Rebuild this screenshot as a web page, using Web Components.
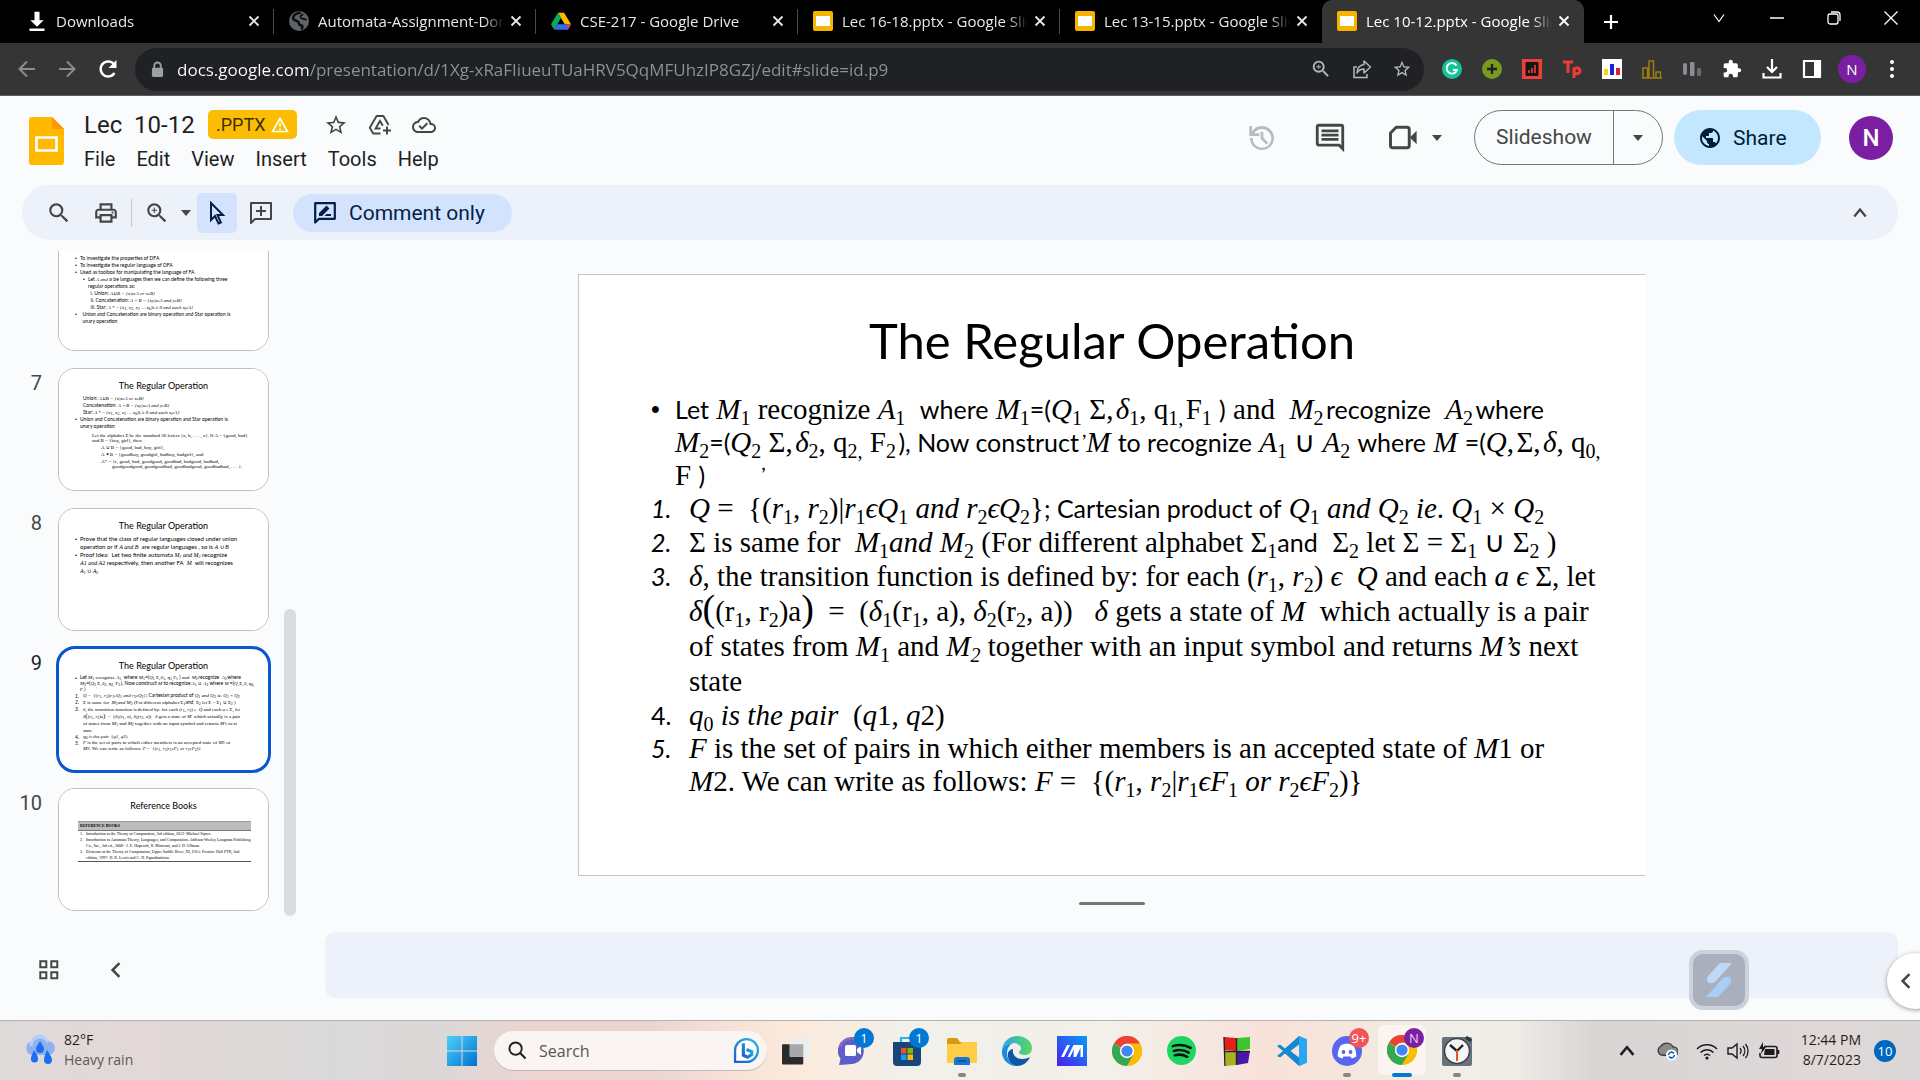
<!DOCTYPE html>
<html lang="en">
<head>
<meta charset="utf-8">
<title>Lec 10-12.pptx - Google Slides</title>
<style>
  html, body { margin: 0; height: 100%; }
  body { overflow: hidden; background: #f9fbfd; font-family: Roboto, "Liberation Sans", sans-serif; color: #1f1f1f; }
</style>
</head>
<body>
<app-desktop></app-desktop>
<script>
const ICONS = {
  dl: ['0 0 24 24', '<path d="M9 1h6v10h5l-8 8-8-8h5zM3 21h18v3H3z" fill="#fff"/>'],
  globeGrey: ['0 0 24 24', '<circle cx="12" cy="12" r="12" fill="#5f6368"/><path d="M14 2c-5 0-9 3-9 6 0 4 4 3 6 5s0 4 3 4 2 3 1 5" fill="none" stroke="#0b0b0b" stroke-width="3"/><path d="M17 4c-2 1-4 2-3 4s5 1 7 3" fill="none" stroke="#0b0b0b" stroke-width="2"/>'],
  drive: ['0 0 24 22', '<path d="M8.3 1h7.4L24 15h-7.5z" fill="#ffba00"/><path d="M8.300 1 12 7.500 3.800 21.500 0 15z" fill="#0da960"/><path d="M7.600 15H24l-3.800 6.500H3.800z" fill="#2d6ff0"/><path d="M18.600 15H24l-3.800 6.500z" fill="#ea4335"/>'],
  slidesTab: ['0 0 20 20', '<rect width="20" height="20" rx="2" fill="#f5b400"/><rect x="3" y="5" width="14" height="10" fill="#fff"/>'],
  close: ['0 0 12 12', '<path d="M1.500 1.500l9 9m0-9l-9 9" stroke="currentColor" stroke-width="1.800" fill="none"/>'],
  plus: ['0 0 16 16', '<path d="M8 1v14M1 8h14" stroke="#fff" stroke-width="2.200"/>'],
  down: ['0 0 16 16', '<path d="M3 4.500l5 7 5-7" stroke="currentColor" stroke-width="1.200" fill="none"/>'],
  min: ['0 0 14 14', '<path d="M0 7h14" stroke="#fff" stroke-width="1.500"/>'],
  max: ['0 0 14 14', '<rect x="1" y="3" width="10" height="10" rx="2" fill="none" stroke="#fff" stroke-width="1.300"/><path d="M4 1h6a3 3 0 0 1 3 3v6" fill="none" stroke="#fff" stroke-width="1.300"/>'],
  xthin: ['0 0 14 14', '<path d="M.500.500l13 13m0-13l-13 13" stroke="#fff" stroke-width="1.300"/>'],
  back: ['0 0 18 18', '<path d="M17 9H2m7-7.500L1.500 9 9 16.500" stroke="#8c8c8c" stroke-width="2" fill="none"/>'],
  fwd: ['0 0 18 18', '<path d="M1 9h15M9 1.500L16.500 9 9 16.500" stroke="#8c8c8c" stroke-width="2" fill="none"/>'],
  reload: ['0 0 20 20', '<path d="M16.500 14a7.500 7.500 0 1 1 .300-7.500" stroke="#fff" stroke-width="2.400" fill="none"/><path d="M18.500 1v8h-8z" fill="#fff"/>'],
  lock: ['0 0 14 18', '<path d="M3.500 8V5a3.500 3.500 0 0 1 7 0v3" stroke="#9aa0a6" stroke-width="2" fill="none"/><rect x="1" y="7" width="12" height="10" rx="1.500" fill="#9aa0a6"/>'],
  zoomin: ['0 0 24 24', '<path fill="currentColor" d="M15.500 14h-.790l-.280-.270A6.470 6.470 0 0 0 16 9.500 6.500 6.500 0 1 0 9.500 16c1.610 0 3.090-.590 4.230-1.570l.270.280v.790l5 4.990L20.490 19zm-6 0C7.010 14 5 11.990 5 9.500S7.010 5 9.500 5 14 7.010 14 9.500 11.990 14 9.500 14zm2.500-4h-2v2H9v-2H7V9h2V7h1v2h2z"/>'],
  search: ['0 0 24 24', '<path fill="currentColor" d="M15.500 14h-.790l-.280-.270A6.470 6.470 0 0 0 16 9.500 6.500 6.500 0 1 0 9.500 16c1.610 0 3.090-.590 4.230-1.570l.270.280v.790l5 4.990L20.490 19zm-6 0C7.010 14 5 11.990 5 9.500S7.010 5 9.500 5 14 7.010 14 9.500 11.990 14 9.500 14z"/>'],
  find: ['0 0 20 20', '<circle cx="8" cy="8" r="6.500" fill="none" stroke="#222" stroke-width="2"/><path d="M12.700 12.700L18.500 18.500" stroke="#222" stroke-width="2.200"/>'],
  share: ['0 0 20 20', '<path d="M5 8H2v10.500h13V15" fill="none" stroke="#b5b8bc" stroke-width="1.500"/><path d="M12 2l6.500 6-6.500 6v-4c-4 0-5.500 1.500-7 4 .300-5 3-8 7-8.500z" fill="none" stroke="#b5b8bc" stroke-width="1.500" stroke-linejoin="round"/>'],
  star: ['0 0 24 24', '<path fill="currentColor" d="M22 9.240l-7.190-.620L12 2 9.190 8.630 2 9.240l5.460 4.730L5.820 21 12 17.270 18.180 21l-1.630-7.030zM12 15.400l-3.760 2.270 1-4.280-3.320-2.880 4.380-.380L12 6.100l1.710 4.040 4.380.380-3.320 2.880 1 4.280z"/>'],
  gram: ['0 0 20 20', '<circle cx="10" cy="10" r="10" fill="#15c39a"/><path d="M14.500 6.500A5.300 5.300 0 1 0 15 11h-4" fill="none" stroke="#fff" stroke-width="1.900"/>'],
  gplus: ['0 0 20 20', '<circle cx="10" cy="10" r="10" fill="#7a9a1f"/><path d="M10 5v10M5 10h10" stroke="#222" stroke-width="2.400"/>'],
  redbox: ['0 0 20 20', '<rect width="20" height="20" fill="#ef4038"/><rect x="3.500" y="3" width="13" height="14" rx="1" fill="#161616"/><path d="M7 14v-3M10 14V9M13 14V6" stroke="#ef4038" stroke-width="1.600"/>'],
  tp: ['0 0 20 20', '<path d="M1 3h10M6 3v11M12 19V8.500M12 11.500a3 3 0 1 1 0 .500" fill="none" stroke="#ef3b36" stroke-width="3"/>'],
  bars: ['0 0 20 20', '<rect width="20" height="20" fill="#fff"/><rect x="2" y="10" width="4" height="6" fill="#f5d800"/><rect x="8" y="5" width="4" height="11" fill="#1524d8"/><rect x="14" y="9" width="4" height="7" fill="#e0202c"/>'],
  gold: ['0 0 20 20', '<path d="M1 19V9h4.500v10zM7 19V2h4.500v17zM14 19v-6h4.500v6zM0 19h20" fill="none" stroke="#a07c14" stroke-width="1.500"/>'],
  greyb: ['0 0 20 20', '<rect x="1" y="4" width="4" height="12" rx="2" fill="#8a8d91"/><rect x="8" y="3" width="4.500" height="14" rx="1" fill="#8a8d91"/><rect x="15" y="9" width="4" height="8" rx="1.500" fill="#6a6d71"/>'],
  puzzle: ['0 0 24 24', '<path fill="#fff" d="M20.500 11H19V7c0-1.100-.900-2-2-2h-4V3.500a2.500 2.500 0 0 0-5 0V5H4c-1.100 0-2 .900-2 2v3.800h1.500a2.700 2.700 0 0 1 0 5.400H2V20c0 1.100.900 2 2 2h3.800v-1.500a2.700 2.700 0 0 1 5.400 0V22H17c1.100 0 2-.900 2-2v-4h1.500a2.500 2.500 0 0 0 0-5z"/>'],
  dltray: ['0 0 20 20', '<path d="M10 0v13M5 8l5 5 5-5M1.500 14v4.500h17V14" fill="none" stroke="#fff" stroke-width="2.200"/>'],
  panel: ['0 0 18 18', '<path d="M1 1h16v16H1z" fill="none" stroke="#fff" stroke-width="2.200"/><path d="M11 1h6v16h-6z" fill="#fff"/>'],
  dots: ['0 0 6 20', '<circle cx="3" cy="3" r="2" fill="#fff"/><circle cx="3" cy="10" r="2" fill="#fff"/><circle cx="3" cy="17" r="2" fill="#fff"/>'],
  slidesLogo: ['0 0 35 48', '<path d="M3 0h20l12 12v33a3 3 0 0 1-3 3H3a3 3 0 0 1-3-3V3a3 3 0 0 1 3-3z" fill="#ffba00"/><path d="M23 0l12 12H23z" fill="#ff9500"/><path d="M7.500 20.500h20v13h-20z" fill="none" stroke="#fff" stroke-width="2.600"/>'],
  warn: ['0 0 18 16', '<path d="M9 1.500l7.500 13h-15z" fill="none" stroke="#fff" stroke-width="1.600"/><path d="M9 6v4M9 11.500v1.600" stroke="#fff" stroke-width="1.600"/>'],
  drvadd: ['0 0 24 24', '<path d="M12.500 20.500H5.200L1.800 14.700 8.600 3h6.800l5.200 9" fill="none" stroke="currentColor" stroke-width="1.900" stroke-linejoin="round"/><path d="M12.500 15.500H7.600L12 8l2.800 4.800" fill="none" stroke="currentColor" stroke-width="1.900"/><path d="M19 13.500v8M15 17.500h8" stroke="currentColor" stroke-width="1.900"/>'],
  cloudok: ['0 0 24 24', '<path fill="currentColor" d="M19.350 10.040A7.490 7.490 0 0 0 12 4C9.110 4 6.600 5.640 5.350 8.040A5.994 5.994 0 0 0 0 14c0 3.310 2.690 6 6 6h13c2.760 0 5-2.240 5-5 0-2.640-2.050-4.780-4.650-4.960zM19 18H6c-2.210 0-4-1.790-4-4 0-2.050 1.530-3.760 3.560-3.970l1.070-.110.500-.950A5.469 5.469 0 0 1 12 6c2.620 0 4.880 1.860 5.390 4.430l.300 1.500 1.530.110A2.980 2.980 0 0 1 22 15c0 1.650-1.350 3-3 3zm-9-3.820l-2.090-2.090L6.500 13.500 10 17l6.010-6.010-1.410-1.410z"/>'],
  history: ['0 0 24 24', '<path fill="currentColor" d="M12 3a9 9 0 0 0-7.500 4.050V3H2.500v7.500H10v-2H6.100A7 7 0 1 1 5 12H3a9 9 0 1 0 9-9zm-1 4.500v5.200l4.300 4.200 1.400-1.400L13 11.800V7.500z"/>'],
  comment: ['0 0 24 24', '<path fill="currentColor" d="M21.990 4c0-1.100-.890-2-1.990-2H4c-1.100 0-2 .900-2 2v12c0 1.100.900 2 2 2h14l4 4zM20 4v13.170L18.830 16H4V4zM6 12h12v2H6zm0-3h12v2H6zm0-3h12v2H6z"/>'],
  video: ['0 0 26 22', '<path d="M7 2h9.500a2 2 0 0 1 2 2v14a2 2 0 0 1-2 2H4a2 2 0 0 1-2-2V7z" fill="none" stroke="currentColor" stroke-width="2.600" stroke-linejoin="round"/><path d="M19 11l6-6v12z" fill="currentColor"/>'],
  caret: ['0 0 10 6', '<path d="M0 0h10L5 6z" fill="currentColor"/>'],
  globe: ['0 0 24 24', '<path fill="#001d35" d="M12 2C6.480 2 2 6.480 2 12s4.480 10 10 10 10-4.480 10-10S17.520 2 12 2zm-1 17.930c-3.950-.490-7-3.850-7-7.930 0-.620.080-1.210.210-1.790L9 15v1c0 1.100.900 2 2 2zm6.900-2.540c-.260-.810-1-1.390-1.900-1.390h-1v-3c0-.550-.450-1-1-1H8v-2h2c.550 0 1-.450 1-1V7h2c1.100 0 2-.900 2-2v-.410c2.930 1.190 5 4.060 5 7.410 0 2.080-.800 3.970-2.100 5.390z"/>'],
  print: ['0 0 24 24', '<path fill="currentColor" d="M19 8h-1V3H6v5H5c-1.660 0-3 1.340-3 3v6h4v4h12v-4h4v-6c0-1.660-1.340-3-3-3zM8 5h8v3H8zm8 12v2H8v-4h8zm2-2v-2H6v2H4v-4c0-.550.450-1 1-1h14c.550 0 1 .450 1 1v4z"/><circle cx="18" cy="11.500" r="1" fill="currentColor"/>'],
  pointer: ['0 0 18 24', '<path d="M3 2v17l4-4 3.500 7.500 2.400-1.100L9.500 14H15z" fill="none" stroke="#041e49" stroke-width="2"/>'],
  addc: ['0 0 24 24', '<path d="M2 2h20v16H6l-4 4z" fill="none" stroke="currentColor" stroke-width="2" stroke-linejoin="round"/><path d="M12 5v10M7 10h10" stroke="currentColor" stroke-width="2"/>'],
  rate: ['0 0 24 24', '<path d="M2.200 2.200h19.600v15.600H6L2.200 21.500z" fill="none" stroke="#041e49" stroke-width="2.200" stroke-linejoin="round"/><path d="M6 15v-3l7.500-7.500 3 3L9 15zM11.500 15l2-2H18v2z" fill="#041e49"/>'],
  up: ['0 0 14 14', '<path d="M2 10l5-6 5 6" stroke="currentColor" stroke-width="2" fill="none"/>'],
  left: ['0 0 14 14', '<path d="M10 1L4 7l6 6" stroke="currentColor" stroke-width="2.200" fill="none"/>'],
  grid: ['0 0 20 20', '<path d="M1.300 1.300h6v6h-6zM12.300 1.300h6v6h-6zM1.300 12.300h6v6h-6zM12.300 12.300h6v6h-6z" fill="none" stroke="currentColor" stroke-width="2"/>'],
  rain: ['0 0 32 30', '<path d="M8 20a7 7 0 0 1-1-13.500A9 9 0 0 1 24 6a7 7 0 0 1 0 14z" fill="#8fb1ee"/><path d="M7 11a9 9 0 0 1 17-4" fill="none" stroke="#b9d0f7" stroke-width="3"/><path d="M16 6c3 5 4 6 4 8a4 4 0 0 1-8 0c0-2 1-3 4-8zM10 15c3 5 4 6 4 9a3.500 3.500 0 0 1-7 0c0-3 1-4 3-9zM23 15c3 5 5 7 5 10a4 4 0 0 1-8 0c0-3 1-5 3-10z" fill="#1c6ef2"/>'],
  win: ['0 0 30 30', '<defs><linearGradient id="g" x1="0" y1="0" x2="1" y2="1"><stop offset="0" stop-color="#4fd0fb"/><stop offset="1" stop-color="#0072d0"/></linearGradient></defs><path d="M0 0h14.500v14.500H0zM15.500 0H30v14.500H15.500zM0 15.500h14.500V30H0zM15.500 15.500H30V30H15.500z" fill="url(#g)"/>'],
  bing: ['0 0 26 26', '<defs><linearGradient id="g" x1="0" y1="1" x2="1" y2="0"><stop offset="0" stop-color="#1d5fd0"/><stop offset="1" stop-color="#27c0dc"/></linearGradient></defs><path d="M2 24V13A11 11 0 1 1 13 24z" fill="#fff" stroke="url(#g)" stroke-width="2.200"/><path d="M10 6v11.500l4 2 4-2.500v-3l-5-2" fill="none" stroke="url(#g)" stroke-width="3"/>'],
  taskv: ['0 0 30 28', '<rect x="0" y="7" width="22" height="21" rx="1" fill="#2b2b2b"/><rect x="8" y="0" width="22" height="20" rx="1" fill="#ededed"/><path d="M8 7h14v13H8z" fill="#a8a8a8"/>'],
  chat: ['0 0 28 28', '<path d="M1 28l1.500-6A13 13 0 1 1 14 27c-4 0-8 1-13 1z" fill="#5b5fc7"/><path d="M2 10A13 13 0 0 1 26 9" fill="none" stroke="#8a66b8" stroke-width="3"/><rect x="7" y="8" width="11" height="11" rx="1.500" fill="#fff"/><path d="M19 12l4-3v9l-4-3z" fill="#fff"/>'],
  store: ['0 0 30 30', '<path d="M9 7V2h12v5" fill="none" stroke="#27b6ea" stroke-width="2.200"/><path d="M1 6h28v20a4 4 0 0 1-4 4H5a4 4 0 0 1-4-4z" fill="#17457c"/><path d="M9 12h5.500v5.500H9z" fill="#f25022"/><path d="M15.500 12H21v5.500h-5.500z" fill="#7fba00"/><path d="M9 18.500h5.500V24H9z" fill="#00a4ef"/><path d="M15.500 18.500H21V24h-5.500z" fill="#ffb900"/>'],
  folder: ['0 0 30 28', '<path d="M0 3a2 2 0 0 1 2-2h8l3 4h15a2 2 0 0 1 2 2v6H0z" fill="#d99a10"/><path d="M0 7h13l2-2h13a2 2 0 0 1 2 2v19H0z" fill="#ffcd45"/><path d="M7 28v-5a3 3 0 0 1 3-3h10a3 3 0 0 1 3 3v5z" fill="#1678d4"/><path d="M11 24h8" stroke="#0b4f96" stroke-width="2"/>'],
  edge: ['0 0 30 30', '<defs><linearGradient id="g" x1="0" y1="0" x2="1" y2="0"><stop offset="0" stop-color="#27a8e8"/><stop offset="1" stop-color="#5bd85e"/></linearGradient></defs><path d="M0 14C1 5 8 0 15 0c9 0 15 6 15 12 0 5-4 7-7 7-4 0-6-1-6-3 0-1 2-1 2-4 0-3-4-5-8-5S2 9 0 14z" fill="url(#g)"/><path d="M0 14c2-5 7-7 11-7-4 2-6 6-6 10 0 6 4 12 10 13C6 30-1 23 0 14z" fill="#1a8fe0"/><path d="M11 13c-1 5 2 10 9 10 3 0 6-1 8-2-2 5-7 9-13 9C8 29 5 22 6 17c.500-2 3-4 5-4z" fill="#0d58a8"/>'],
  asus: ['0 0 30 30', '<defs><linearGradient id="g" x1="0" y1="1" x2="1" y2="0"><stop offset="0" stop-color="#4a1ff0"/><stop offset="1" stop-color="#0a9af5"/></linearGradient></defs><rect width="30" height="30" fill="url(#g)"/><path d="M4 21L10 9h3L7 21zM10.500 21l6-12h2.500l-6 12zM17 9h9v12h-2.500v-9L19 21h-2.500z" fill="#fff"/>'],
  chrome: ['0 0 30 30', '<circle cx="15" cy="15" r="15" fill="#fbbc05"/><path d="M15 15L2 7.500A15 15 0 0 1 28 7.500z" fill="#ea4335"/><path d="M15 15h-2L2 7.500A15 15 0 0 0 15 30l6.500-11.200z" fill="#34a853"/><path d="M28 7.500H15V15l6.500 3.800L15 30A15 15 0 0 0 28 7.500z" fill="#fbbc05"/><circle cx="15" cy="15" r="7.200" fill="#fff"/><circle cx="15" cy="15" r="5.600" fill="#4285f4"/>'],
  spotify: ['0 0 30 30', '<circle cx="15" cy="15" r="15" fill="#1ed760"/><path d="M6 10.500c6-2 13-1.300 18.500 1.800M7 15.500c5-1.500 11-.900 15.500 1.700M8 20c4-1.200 9-.700 13 1.500" stroke="#111" stroke-width="2.600" fill="none" stroke-linecap="round"/>'],
  cube: ['0 0 28 30', '<path d="M1 1l12 1v13L2 14z" fill="#e5201c"/><path d="M14 2l13-1v12l-13 2z" fill="#3ec52c"/><path d="M2 16h11v13L3 30z" fill="#a9b11c"/><path d="M14 16l13-1-2 12-11 2z" fill="#4a16a6"/><path d="M1 1l1 29M13.500 2v27M2 15.500h25" stroke="#222" stroke-width="1.400"/>'],
  vscode: ['0 0 30 30', '<path d="M22 0l8 3.500v23L22 30 8 17.500l-5 4L0 20l6-5-6-5 3-1.500 5 4zm0 8.500L13.500 15l8.500 6.500z" fill="#1588d3"/><path d="M22 0l8 3.500v23L22 30z" fill="#2aa7f2"/>'],
  discord: ['0 0 30 30', '<circle cx="15" cy="15" r="15" fill="#5865f2"/><path d="M8.500 9.500c4-2.200 9-2.200 13 0 2 3.500 3 7 2.700 11-1.500 1-3 1.700-4.500 2l-1.200-2h-7l-1.200 2c-1.500-.300-3-1-4.500-2-.300-4 .700-7.500 2.700-11z" fill="#fff"/><circle cx="11.500" cy="16" r="1.900" fill="#5865f2"/><circle cx="18.500" cy="16" r="1.900" fill="#5865f2"/>'],
  clock: ['0 0 30 30', '<rect y="1" width="30" height="29" rx="2" fill="#67727c"/><circle cx="15" cy="15" r="12.500" fill="#f5f5f5" stroke="#3a4249" stroke-width="1.500"/><path d="M15 15L8 9M15 15l6-6" stroke="#222" stroke-width="2.400"/><path d="M15 14v11" stroke="#e8531f" stroke-width="2"/><path d="M24 1l5 4" stroke="#333" stroke-width="3"/>'],
  onedrive: ['0 0 22 20', '<path d="M5 14a5 5 0 0 1 0-9 7 7 0 0 1 12 1 4.500 4.500 0 0 1 1 9z" fill="#8b8b8b" stroke="#3c3c3c" stroke-width="1.300"/><circle cx="15.500" cy="14" r="5.500" fill="#fff"/><path d="M12.500 14a3 3 0 0 1 5.500-1.500M18.500 14a3 3 0 0 1-5.500 1.500" stroke="#0067c0" stroke-width="1.500" fill="none"/>'],
  wifi: ['0 0 22 18', '<path d="M1 7a14 14 0 0 1 20 0M4.500 10.500a9 9 0 0 1 13 0M8 13.500a4.500 4.500 0 0 1 6 0" stroke="#1b1b1b" stroke-width="1.500" fill="none"/><circle cx="11" cy="16" r="1.600" fill="#1b1b1b"/>'],
  vol: ['0 0 22 18', '<path d="M1 6h4l5-4v14l-5-4H1z" fill="none" stroke="#1b1b1b" stroke-width="1.400"/><path d="M13 6a5 5 0 0 1 0 6M16 4a8 8 0 0 1 0 10M18.500 2a11 11 0 0 1 0 14" stroke="#1b1b1b" stroke-width="1.300" fill="none"/>'],
  bat: ['0 0 22 18', '<path d="M6 4.500h11a2 2 0 0 1 2 2v7a2 2 0 0 1-2 2H4a2 2 0 0 1-2-2V11M20.500 8v4" fill="none" stroke="#1b1b1b" stroke-width="1.600"/><path d="M7 7h9.500v6H6z" fill="#1b1b1b"/><path d="M5 0L1 7h3l-1 5 5-7H5z" fill="#1b1b1b"/>'],
  stack: ['0 0 26 34', '<path d="M14 0h12L10 18c-3 3-9 3-9-1 0-2 0-3 2-5z" fill="#bdd9f6"/><path d="M12 34H0l16-18c3-3 9-3 9 1 0 2 0 3-2 5z" fill="#a9cdf4"/>']
};

/* name= picks the drawing, w= and h= set its box */
class UiIcon extends HTMLElement {
  constructor() {
    super();
    this.attachShadow({ mode: 'open' });
  }
  connectedCallback() {
    const icon = ICONS[this.getAttribute('name')];
    if (!icon) return;
    const [box, art] = icon;
    const w = this.getAttribute('w') || 20, h = this.getAttribute('h') || w;
    this.shadowRoot.innerHTML = `<style>:host{display:block;flex:none;width:${w}px;height:${h}px}svg{display:block;width:100%;height:100%}</style><svg viewBox="${box}" aria-hidden="true">${art}</svg>`;
  }
}
customElements.define('ui-icon', UiIcon);

const RESET = `*{box-sizing:border-box}button{font:inherit;color:inherit;background:none;border:0;margin:0;padding:0;display:flex;align-items:center;justify-content:center;white-space:nowrap;flex:none}input{font:inherit;color:inherit;background:none;border:0;margin:0;padding:0;outline:0;min-width:0}`;

function define(name, html, setup) {
  const t = document.createElement('template');
  t.innerHTML = `<style>${RESET}</style>` + html;
  customElements.define(name, class extends HTMLElement {
    constructor() {
      super();
      this.attachShadow({ mode: 'open' }).append(t.content.cloneNode(true));
    }
    connectedCallback() { if (setup) setup(this, this.shadowRoot); }
  });
}

define('browser-tab', `
<style>
  :host{display:flex;align-items:center;flex:0 1 262px;min-width:0;height:43px;padding:0 14px 2px 15px;color:#e8e8e8;font-size:15px;position:relative}
  :host(:not([active]):not([last]))::after{content:"";position:absolute;right:0;top:9px;height:25px;width:1px;background:#4a4a4a}
  :host([active]){background:#353535;border-radius:10px 10px 0 0;color:#fff}
  .title{flex:1;min-width:0;margin:0 6px 0 9px;overflow:hidden;white-space:nowrap;-webkit-mask-image:linear-gradient(to right,#000 calc(100% - 20px),transparent)}
</style>
<ui-icon></ui-icon><span class="title"><slot></slot></span><button aria-label="Close tab"><ui-icon name="close" w="12"></ui-icon></button>`,
(el, r) => {
  const i = document.createElement('ui-icon');
  i.setAttribute('name', el.getAttribute('icon'));
  i.setAttribute('w', 20);
  r.querySelector('ui-icon').replaceWith(i);
});

define('browser-frame', `
<style>
  :host{display:block;font-family:"Open Sans","Noto Sans",sans-serif;background:#000}
  .tabs{display:flex;height:43px;padding-left:12px}
  .win{margin-left:auto;display:flex;align-items:center;height:36px;gap:43px;padding-right:22px;color:#fff}
  .new{width:54px}
  .bar{display:flex;align-items:center;height:53px;background:#353535;border-bottom:1px solid #5c5c5c;padding:0 18px}
  .nav{display:flex;width:117px;gap:22px}
  .omni{flex:1;display:flex;align-items:center;height:43px;border-radius:22px;background:#202124;padding:0 12px 0 16px;color:#b5b8bc}
  .omni input{flex:1;margin-left:13px;font-size:17px;color:transparent;background:linear-gradient(to right,#fff 133px,#8f9398 133px);-webkit-background-clip:text;background-clip:text}
  .omni .acts{display:flex;gap:20px}
  .ext{display:flex;align-items:center;gap:20px;margin-left:18px}
  .me{width:28px;height:28px;border-radius:50%;background:#7b1fa2;color:#fff;font-size:15px;margin:0 -4px}
</style>
<div class="tabs">
  <browser-tab icon="dl">Downloads</browser-tab>
  <browser-tab icon="globeGrey">Automata-Assignment-Done</browser-tab>
  <browser-tab icon="drive">CSE-217 - Google Drive</browser-tab>
  <browser-tab icon="slidesTab">Lec 16-18.pptx - Google Slides</browser-tab>
  <browser-tab icon="slidesTab" last>Lec 13-15.pptx - Google Slides</browser-tab>
  <browser-tab icon="slidesTab" active>Lec 10-12.pptx - Google Slides</browser-tab>
  <button class="new" aria-label="New tab"><ui-icon name="plus" w="16"></ui-icon></button>
  <div class="win">
    <button aria-label="Tab search"><ui-icon name="down" w="16"></ui-icon></button>
    <button aria-label="Minimize"><ui-icon name="min" w="14"></ui-icon></button>
    <button aria-label="Restore"><ui-icon name="max" w="14"></ui-icon></button>
    <button aria-label="Close"><ui-icon name="xthin" w="14"></ui-icon></button>
  </div>
</div>
<div class="bar">
  <div class="nav">
    <button aria-label="Back"><ui-icon name="back" w="18"></ui-icon></button>
    <button aria-label="Forward"><ui-icon name="fwd" w="18"></ui-icon></button>
    <button aria-label="Reload"><ui-icon name="reload" w="20"></ui-icon></button>
  </div>
  <div class="omni">
    <ui-icon name="lock" w="13" h="17"></ui-icon>
    <input aria-label="Address" value="docs.google.com/presentation/d/1Xg-xRaFIiueuTUaHRV5QqMFUhzIP8GZj/edit#slide=id.p9">
    <div class="acts">
      <button aria-label="Zoom"><ui-icon name="zoomin" w="22"></ui-icon></button>
      <button aria-label="Share this page"><ui-icon name="share" w="20"></ui-icon></button>
      <button aria-label="Bookmark"><ui-icon name="star" w="20"></ui-icon></button>
    </div>
  </div>
  <div class="ext">
    <button aria-label="Writing check"><ui-icon name="gram"></ui-icon></button>
    <button aria-label="Add"><ui-icon name="gplus"></ui-icon></button>
    <button aria-label="Chart"><ui-icon name="redbox"></ui-icon></button>
    <button aria-label="Test panel"><ui-icon name="tp"></ui-icon></button>
    <button aria-label="Bars"><ui-icon name="bars"></ui-icon></button>
    <button aria-label="Gold bars"><ui-icon name="gold"></ui-icon></button>
    <button aria-label="Grey bars"><ui-icon name="greyb"></ui-icon></button>
    <button aria-label="Extensions"><ui-icon name="puzzle"></ui-icon></button>
    <button aria-label="Downloads"><ui-icon name="dltray"></ui-icon></button>
    <button aria-label="Side panel"><ui-icon name="panel" w="20" h="18"></ui-icon></button>
    <button class="me">N</button>
    <button aria-label="Menu"><ui-icon name="dots" w="20"></ui-icon></button>
  </div>
</div>`);

define('docs-header', `
<style>
  :host{display:flex;height:89px;padding:14px 27px 0 29px;color:#444746}
  .logo{margin:7px 20px 0 0}
  .row{display:flex;align-items:center;height:29px}
  .row input{width:124px;font-size:24px;color:#1f1f1f;white-space:pre}
  .badge{height:29px;padding:0 8px;gap:6px;border-radius:5px;background:#fbbc04;color:#3c3000;font-size:18px;margin-right:27px}
  .acts{display:flex;gap:20px}
  nav{display:flex;gap:21px;margin-top:8px;font-size:20px;line-height:24px;color:#1f1f1f}
  .right{margin-left:auto;display:flex;align-items:center;height:55px}
  .history{color:#b9bbbd;margin-right:35px}
  .notes{margin-right:41px}
  .call{gap:14px}
  .pill{display:flex;height:55px;border:1px solid #747775;border-radius:28px;font-size:21px;margin:0 11px 0 32px}
  .pill .main{width:138px;padding-bottom:2px}
  .pill .arr{width:49px;border-left:1px solid #747775}
  .share{height:55px;width:147px;border-radius:28px;background:#c2e7ff;color:#001d35;font-size:21px;gap:11px;margin-right:28px;justify-content:flex-start;padding-left:24px}
  .me{width:44px;height:44px;border-radius:50%;background:#7b1fa2;color:#fff;font-size:24px;font-weight:500}
</style>
<ui-icon class="logo" name="slidesLogo" w="35" h="48"></ui-icon>
<div>
  <div class="row">
    <input aria-label="Document title" value="Lec  10-12">
    <button class="badge">.PPTX<ui-icon name="warn" w="18" h="16"></ui-icon></button>
    <div class="acts">
      <button aria-label="Star"><ui-icon name="star" w="24"></ui-icon></button>
      <button aria-label="Add shortcut to Drive"><ui-icon name="drvadd" w="24"></ui-icon></button>
      <button aria-label="Saved to Drive"><ui-icon name="cloudok" w="24"></ui-icon></button>
    </div>
  </div>
  <nav>
    <button>File</button><button>Edit</button><button>View</button><button>Insert</button><button>Tools</button><button>Help</button>
  </nav>
</div>
<div class="right">
  <button class="history" aria-label="Version history"><ui-icon name="history" w="32"></ui-icon></button>
  <button class="notes" aria-label="Comments"><ui-icon name="comment" w="34"></ui-icon></button>
  <button class="call" aria-label="Join a call"><ui-icon name="video" w="30" h="25"></ui-icon><ui-icon name="caret" w="10" h="6"></ui-icon></button>
  <div class="pill"><button class="main">Slideshow</button><button class="arr" aria-label="Slideshow options"><ui-icon name="caret" w="10" h="6"></ui-icon></button></div>
  <button class="share"><ui-icon name="globe" w="24"></ui-icon>Share</button>
  <button class="me">N</button>
</div>`);

define('docs-toolbar', `
<style>
  :host{display:flex;align-items:center;height:55px;margin:0 22px;padding:0 30px 0 24px;border-radius:28px;background:#edf2fa;color:#444746}
  .print{margin-left:21px}
  .sep{width:1px;height:28px;background:#c7c7c7;margin:0 12px}
  .zoom{gap:11px}
  .sel{width:40px;height:40px;border-radius:5px;background:#d3e3fd;margin:0 12px 0 6px}
  .mode{width:219px;height:38px;border-radius:19px;background:#d3e3fd;color:#041e49;font-size:21px;gap:12px;margin-left:20px;justify-content:flex-start;padding-left:20px}
  .hide{margin-left:auto}
</style>
<button aria-label="Search the menus"><ui-icon name="search" w="26"></ui-icon></button>
<button class="print" aria-label="Print"><ui-icon name="print" w="26"></ui-icon></button>
<span class="sep"></span>
<button class="zoom" aria-label="Zoom"><ui-icon name="zoomin" w="26"></ui-icon><ui-icon name="caret" w="10" h="6"></ui-icon></button>
<button class="sel" aria-label="Select"><ui-icon name="pointer" w="18" h="24"></ui-icon></button>
<button aria-label="Add comment"><ui-icon name="addc" w="24"></ui-icon></button>
<button class="mode"><ui-icon name="rate" w="24"></ui-icon>Comment only</button>
<button class="hide" aria-label="Hide the menus"><ui-icon name="up" w="16"></ui-icon></button>`);

/* slide contents, shared by the canvas and the filmstrip */
const SLIDES = {
  7: `<h2>The Regular Operation</h2><ul class="plain"><li><p><b>Union:</b> <i>A∪B = {x|xϵA or xϵB}</i></p><p><b>Concatenation:</b> <i>A ∘ B = {xy|xϵA and yϵB}</i></p><p><b>Star:</b> <i>A</i> * = <i>{x<sub>1</sub>, x<sub>2</sub>, x<sub>3</sub> … x<sub>k</sub>|k ≥ 0 and each x<sub>i</sub>ϵA}</i></p></li></ul><ul><li><p><b>Union and Concatenation are binary operation and Star operation is</b></p><p><b>unary operation</b></p></li></ul><div class="quote"><p>Let the alphabet Σ be the standard 26 letters {a, b, . . . , z}. If A = {good, bad}</p><p>and B = {boy, girl}, then</p><p class="in">A ∪ B = {good, bad, boy, girl},</p><p class="in">A ∘ B = {goodboy, goodgirl, badboy, badgirl}, and</p><p class="in">A* = {ε, good, bad, goodgood, goodbad, badgood, badbad,</p><p class="in2">goodgoodgood, goodgoodbad, goodbadgood, goodbadbad, . . . }.</p></div>`,
  6: `<h2>&nbsp;</h2><ul><li><p><b>To investigate the properties of DFA</b></p></li><li><p><b>To investigate the regular language of DFA</b></p></li><li><p><b>Used as toolbox for manipulating the language of FA</b></p><ul><li><p><b>Let</b> <i>A and B</i> <b>be languages then we can define the following three</b></p><p><b>regular operations as:</b></p><p><b>&nbsp; i. Union:</b> <i>A∪B = {x|xϵA or xϵB}</i></p><p><b>&nbsp; ii. Concatenation:</b> <i>A ∘ B = {xy|xϵA and yϵB}</i></p><p><b>&nbsp; iii. Star:</b> <i>A</i> * = <i>{x<sub>1</sub>, x<sub>2</sub>, x<sub>3</sub> … x<sub>k</sub>|k ≥ 0 and each x<sub>i</sub>ϵA}</i></p></li></ul></li><li><p><b>&nbsp; Union and Concatenation are binary operation and Star operation is</b></p><p><b>&nbsp; unary operation</b></p></li></ul>`,
  8: `<h2>The Regular Operation</h2><ul><li><p><b>Prove that the class of regular languages closed under union</b></p><p><b>operation or If</b> <i>A and B</i> &nbsp;<b>are regular languages , so is</b> <i>A</i> ∪ <i>B</i></p></li><li><p><b>Proof Idea: &nbsp;Let two finite automata</b> <i>M<sub>1</sub> and M<sub>2</sub></i> <b>recognize</b></p><p><i>A</i>1 <i>and A</i>2 <b>respectively, then another FA</b> &nbsp;<i>M</i> &nbsp;<b>will recognizes</b></p><p><i>A</i><sub>1</sub> ∪ <i>A</i><sub>2</sub></p></li></ul>`,
  9: `<h2>The Regular Operation</h2><ul><li><p><b>Let</b> <i>M</i><sub>1</sub> recognize <i>A</i><sub>1</sub> &nbsp;<b>where</b> <i>M</i><sub>1</sub><b>=(</b><i>Q</i><sub>1</sub><sub class="low">,</sub> Σ,&hairsp;<i>δ</i><sub>1</sub>, q<sub>1,</sub>&hairsp;F<sub>1</sub> <b>)</b> and &nbsp;<i>M</i><sub>2</sub>&hairsp;<b>recognize</b> &nbsp;<i>A</i><sub>2</sub>&hairsp;<b>where</b></p><p><i>M</i><sub>2</sub><b>=(</b><i>Q</i><sub>2</sub><sub class="low">,</sub> Σ,&hairsp;<i>δ</i><sub>2</sub>, q<sub>2,</sub> F<sub>2</sub>&hairsp;<b>), Now construct</b> <i>M</i> <b>to recognize</b> <i>A</i><sub>1</sub> ∪ <i>A</i><sub>2</sub> <b>where</b> <i>M</i> <b>=(</b><i>Q</i>,&hairsp;Σ,&hairsp;<i>δ</i>, q<sub>0,</sub></p><p>F <b>)</b></p></li></ul>
<ol><li><p><i>Q</i> = &nbsp;{(<i>r</i><sub>1</sub>, <i>r</i><sub>2</sub>)|<i>r</i><sub>1</sub><i>ϵQ</i><sub>1</sub> <i>and r</i><sub>2</sub><i>ϵQ</i><sub>2</sub>}<b>; Cartesian product of</b> <i>Q</i><sub>1</sub> <i>and Q</i><sub>2</sub> <i>ie</i>. <i>Q</i><sub>1</sub> × <i>Q</i><sub>2</sub></p></li>
<li class="mid"><p>Σ is same for &nbsp;<i>M</i><sub>1</sub><i>and M</i><sub>2</sub> (For different alphabet Σ<sub>1</sub><b>and</b> &nbsp;Σ<sub>2</sub><sub class="low">,</sub> let Σ = Σ<sub>1</sub> ∪ Σ<sub>2</sub> )</p></li>
<li class="tall"><p><i>δ</i>, the transition function is defined by: for each (<i>r</i><sub>1</sub>, <i>r</i><sub>2</sub>) <i>ϵ &nbsp;Q</i> and each <i>a ϵ</i> Σ, let</p><p><i>δ</i><span class="big">(</span>(r<sub>1</sub>, r<sub>2</sub>)a<span class="big">)</span> &nbsp;= &nbsp;(<i>δ</i><sub>1</sub>(r<sub>1</sub>, a), <i>δ</i><sub>2</sub>(r<sub>2</sub>, a)) &nbsp; <i>δ</i> gets a state of <i>M</i> &nbsp;which actually is a pair</p><p>of states from <i>M</i><sub>1</sub> and <i>M<sub>2</sub></i> together with an input symbol and returns <i>M’s</i> next</p><p>state</p></li>
<li class="up"><p><i>q</i><sub>0</sub> <i>is the pair</i> &nbsp;(<i>q</i>1, <i>q</i>2)</p></li>
<li><p><i>F</i> is the set of pairs in which either members is an accepted state of <i>M</i>1 or</p><p><i>M</i>2. We can write as follows: <i>F</i> = &nbsp;{(<i>r</i><sub>1</sub>, <i>r</i><sub>2</sub>|<i>r</i><sub>1</sub><i>ϵF</i><sub>1</sub> <i>or r</i><sub>2</sub><i>ϵF</i><sub>2</sub>)}</p></li></ol>`,
  10: `<h2>Reference Books</h2><table><tr><th colspan="2">REFERENCE BOOKS</th></tr><tr><td>1.</td><td>Introduction to the Theory of Computation, 3rd edition, 2012- Michael Sipser.</td></tr><tr><td>2.</td><td>Introduction to Automata Theory, Languages, and Computation. Addison-Wesley Longman Publishing<br>Co., Inc., 3rd ed., 2008 - J. E. Hopcroft, R. Motwani, and J. D. Ullman.</td></tr><tr><td>3.</td><td>Elements of the Theory of Computation, Upper Saddle River, NJ, USA: Prentice Hall PTR, 2nd<br>edition, 1997- H. R. Lewis and C. H. Papadimitriou.</td></tr></table>`
};

class SlidePage extends HTMLElement {
  constructor() { super(); this.attachShadow({ mode: 'open' }); }
  connectedCallback() {
    this.shadowRoot.innerHTML = `<style>
      :host{display:block;background:#fff;color:#000;overflow:hidden;font-family:"Liberation Serif",serif;
        --t:49px;--tl:60px;--top:35px;--gap:23px;--f:29px;--l:33px;--m:34px;--h:35px;--s:20px;--d:-6px;--x:72px;--b:24px;--u:38px;--sf:25px;--big:38px;--low:12px;
        padding-top:var(--top)}
      :host([small]){--t:9px;--tl:12px;--top:11px;--gap:3px;--f:5px;--l:6px;--m:7px;--h:7px;--s:4px;--d:-1px;--x:16px;--b:5px;--u:8px;--sf:5px;--big:7px;--low:2px}
      :host([n="8"]){--f:6px;--sf:6px;--l:8px}
      :host([n="6"]),:host([n="7"]){--l:7px}
      h2{margin:0 0 var(--gap);text-align:center;font:400 var(--t)/var(--tl) Lato,sans-serif}
      ul,ol{margin:0;padding:0 0 0 var(--x);list-style:none;font-size:var(--f);line-height:var(--l)}
      ul ul{padding-left:3px}
      li{position:relative;padding-left:var(--b)}
      ul>li::before,ol>li::before{position:absolute;left:0;font-family:Lato,sans-serif}
      ul>li::before{content:"•";font-family:"Liberation Sans",sans-serif;font-size:var(--sf)}
      ol{counter-reset:n}
      ol>li{padding-left:var(--u);counter-increment:n}
      ol>li::before{content:counter(n) ".";font-style:italic;font-size:var(--sf)}
      ol>li.up::before{font-style:normal}
      .plain>li{padding-left:8px}
      .plain>li::before{content:none}
      .mid{line-height:var(--m)}.tall{line-height:var(--h)}
      p{margin:0;white-space:nowrap}
      b{font-family:Lato,sans-serif;font-weight:400;font-size:var(--sf);line-height:0}
      i{line-height:0}
      sub{font-size:var(--s);line-height:0;vertical-align:var(--d)}
      .low{display:inline-block;width:0;position:relative;top:var(--low);font-family:Lato,sans-serif}
      .big{font-size:var(--big);line-height:0}
      .quote{margin:3px 0 0 33px;font-size:5px;line-height:5px}
      .quote .in{padding-left:9px;margin-top:2px}.quote .in2{padding-left:20px}
      table{margin:9px 16px 0 19px;border-collapse:collapse;font-size:4px;line-height:6px;border-bottom:1px solid #555;border-top:1px solid #999}
      th{text-align:left;background:#bdbdbd;padding:1px 2px;border-bottom:1px solid #777}
      td{padding:0 1px 0 2px;vertical-align:top;white-space:nowrap}
    </style>` + SLIDES[this.getAttribute('n')];
  }
}
customElements.define('slide-page', SlidePage);

define('slide-thumb', `
<style>
  :host{display:flex;flex:none;gap:16px;height:123px}
  .n{width:42px;text-align:right;font-size:20px;line-height:24px;padding-top:3px;color:#444746}
  button{display:block;width:211px;height:123px;border:1px solid #bdc1bf;border-radius:17px;overflow:hidden;background:#fff;text-align:left}
  :host([current]) .n{color:#1f1f1f}
  :host([current]) button{outline:3px solid #0b57d0;outline-offset:-1px;border-color:#0b57d0}
  slide-page{height:121px}
</style>
<span class="n"></span><button></button>`,
(el, r) => {
  const n = el.getAttribute('n');
  if (!el.hasAttribute('cut')) r.querySelector('.n').textContent = n;
  r.querySelector('button').setAttribute('aria-label', 'Slide ' + n);
  r.querySelector('button').innerHTML = `<slide-page small n="${n}"></slide-page>`;
});

define('film-strip', `
<style>
  :host{display:flex;flex-direction:column;width:325px;flex:none;padding-top:11px;color:#444746}
  .scroll{flex:1;min-height:0;display:flex}
  .list{flex:none;width:284px;overflow:hidden;display:flex;flex-direction:column;justify-content:flex-end;gap:17px;padding-bottom:5px}
  .bar{align-self:flex-end;width:12px;height:307px;border-radius:6px;background:#dadce0}
  .foot{height:104px;display:flex;align-items:center;padding:4px 0 0 39px;gap:49px}
</style>
<div class="scroll">
  <div class="list">
    <slide-thumb n="6" cut></slide-thumb><slide-thumb n="7"></slide-thumb><slide-thumb n="8"></slide-thumb><slide-thumb n="9" current></slide-thumb><slide-thumb n="10"></slide-thumb>
  </div>
  <div class="bar"></div>
</div>
<div class="foot">
  <button aria-label="Grid view"><ui-icon name="grid" w="20"></ui-icon></button>
  <button aria-label="Hide filmstrip"><ui-icon name="left" w="16"></ui-icon></button>
</div>`);

define('slide-canvas', `
<style>
  :host{flex:1;min-width:0;display:flex;flex-direction:column;align-items:center;padding:34px 22px 22px 0}
  slide-page{width:100%;max-width:1067px;height:602px;flex:none;box-sizing:border-box;border:1px solid #c4c7c5;border-right:0}
  .grip{width:66px;height:3px;border-radius:2px;background:#747775;margin-top:26px}
  textarea{margin-top:auto;width:100%;height:66px;border:0;border-radius:10px;background:#edf2fa;resize:none;outline:0}
</style>
<slide-page n="9"></slide-page>
<div class="grip"></div>
<textarea aria-label="Speaker notes"></textarea>`);

define('task-app', `
<style>
  :host{display:block;width:55px;height:52px;position:relative;flex:none}
  button{width:100%;height:100%}
  .badge{position:absolute;right:5px;top:3px;min-width:20px;height:20px;border-radius:10px;background:#0078d4;color:#fff;font-size:13px;line-height:20px;text-align:center}
  :host([tone="red"]) .badge{background:#f05656}
  :host([tone="me"]) .badge{background:#7b1fa2;color:#e6d0ee}
  :host([dot])::after{content:"";position:absolute;left:24px;bottom:0;width:8px;height:4px;border-radius:2px;background:#8b8582}
  :host([active])::after{content:"";position:absolute;left:18px;bottom:0;width:20px;height:4px;border-radius:2px;background:#0078d4}
  :host([active]) button{background:#fbf5f1;border-radius:6px;width:48px;height:50px;margin:0 auto}
</style>
<button><slot></slot></button>`,
(el, r) => {
  r.querySelector('button').setAttribute('aria-label', el.getAttribute('label'));
  if (el.hasAttribute('badge')) {
    const b = document.createElement('span');
    b.className = 'badge';
    b.textContent = el.getAttribute('badge');
    r.append(b);
  }
});

define('task-bar', `
<style>
  :host{display:grid;grid-template-columns:1fr auto 1fr;align-items:center;height:60px;border-top:1px solid #b5b1ae;font-family:"Open Sans","Noto Sans",sans-serif;font-size:14px;line-height:20px;
    background:linear-gradient(to right,#dfdada 0,#e2d8d7 7%,#dad9d9 17%,#dbd8d7 23%,#ead5d3 27%,#ead5d3 34%,#f6e2d7 38%,#fcebdd 42%,#f1f0ea 47%,#f3efe9 58%,#f8e2da 66%,#f5e6dc 70%,#f0efe9 76%,#efebe6 79%,#d8d5d5 83%,#dcd7d7 91%,#e1d7d7 95%,#dad8d8 100%)}
  .weather{display:flex;align-items:center;gap:8px;padding:0 0 2px 24px;justify-self:start;text-align:left}
  .weather small{display:block;font-size:14px;color:#5b5858}
  .mid{display:flex;align-items:center;padding-left:11px;min-width:1046px;height:52px}
  label{display:flex;align-items:center;width:273px;height:39px;border-radius:20px;background:#faf5f3;box-shadow:0 1px 0 #c5b9b6;padding:0 7px 0 14px;margin:0 2px 0 17px;font-size:16px}
  label input{flex:1;margin-left:12px}
  label input::placeholder{color:#555;opacity:1}
  .tray{display:flex;align-items:center;justify-self:end;gap:8px;padding-right:24px}
  .more{margin-right:12px}
  .cloud{margin-right:10px}
  .sys{gap:9px}
  time{text-align:right;margin-left:13px;white-space:nowrap;padding-bottom:2px}
  .count{width:22px;height:22px;border-radius:50%;background:#0067c0;color:#fff;font-size:13px;margin-left:5px}
</style>
<button class="weather"><ui-icon name="rain" w="32" h="30"></ui-icon><span>82°F<small>Heavy rain</small></span></button>
<div class="mid">
  <button aria-label="Start"><ui-icon name="win" w="30"></ui-icon></button>
  <label><ui-icon name="find" w="19"></ui-icon><input placeholder="Search" aria-label="Search"><ui-icon name="bing" w="27"></ui-icon></label>
  <task-app label="Task view"><ui-icon name="taskv" w="29" h="28"></ui-icon></task-app>
  <task-app label="Chat" badge="1"><ui-icon name="chat" w="28"></ui-icon></task-app>
  <task-app label="Store" badge="1"><ui-icon name="store" w="30"></ui-icon></task-app>
  <task-app label="File Explorer" dot><ui-icon name="folder" w="30" h="28"></ui-icon></task-app>
  <task-app label="Edge"><ui-icon name="edge" w="30"></ui-icon></task-app>
  <task-app label="MyASUS"><ui-icon name="asus" w="30"></ui-icon></task-app>
  <task-app label="Chrome"><ui-icon name="chrome" w="30"></ui-icon></task-app>
  <task-app label="Spotify"><ui-icon name="spotify" w="29"></ui-icon></task-app>
  <task-app label="Blocks"><ui-icon name="cube" w="28" h="30"></ui-icon></task-app>
  <task-app label="Code"><ui-icon name="vscode" w="30"></ui-icon></task-app>
  <task-app label="Discord" badge="9+" tone="red" dot><ui-icon name="discord" w="30"></ui-icon></task-app>
  <task-app label="Chrome, N" badge="N" tone="me" active><ui-icon name="chrome" w="30"></ui-icon></task-app>
  <task-app label="Clock" dot><ui-icon name="clock" w="30"></ui-icon></task-app>
</div>
<div class="tray">
  <button class="more" aria-label="Hidden icons"><ui-icon name="up" w="18"></ui-icon></button>
  <button class="cloud" aria-label="OneDrive"><ui-icon name="onedrive" w="22" h="20"></ui-icon></button>
  <button class="sys" aria-label="Network, sound and battery"><ui-icon name="wifi" w="22" h="18"></ui-icon><ui-icon name="vol" w="22" h="18"></ui-icon><ui-icon name="bat" w="22" h="18"></ui-icon></button>
  <time datetime="2023-08-07T12:44">12:44 PM<br>8/7/2023</time>
  <button class="count">10</button>
</div>`);

define('app-desktop', `
<style>
  :host{display:flex;flex-direction:column;height:100vh;min-height:900px;position:relative;overflow:hidden}
  browser-frame,docs-header,docs-toolbar,task-bar{flex:none}
  main{flex:1;min-height:0;display:flex}
  .float,.side{position:absolute;z-index:2}
  .float{right:171px;bottom:70px;width:60px;height:60px;border:4px solid #cdd1da;border-radius:14px;background:#a9afbc}
  .side{right:-23px;bottom:71px;width:56px;height:56px;border-radius:50%;background:#fff;box-shadow:0 1px 4px rgba(60,64,67,.5);color:#444746;justify-content:flex-start;padding-left:11px}
</style>
<browser-frame></browser-frame>
<docs-header></docs-header>
<docs-toolbar></docs-toolbar>
<main><film-strip></film-strip><slide-canvas></slide-canvas></main>
<task-bar></task-bar>
<button class="float" aria-label="Quick capture"><ui-icon name="stack" w="26" h="34"></ui-icon></button>
<button class="side" aria-label="Show side panel"><ui-icon name="left" w="16"></ui-icon></button>`);
</script>
</body>
</html>
